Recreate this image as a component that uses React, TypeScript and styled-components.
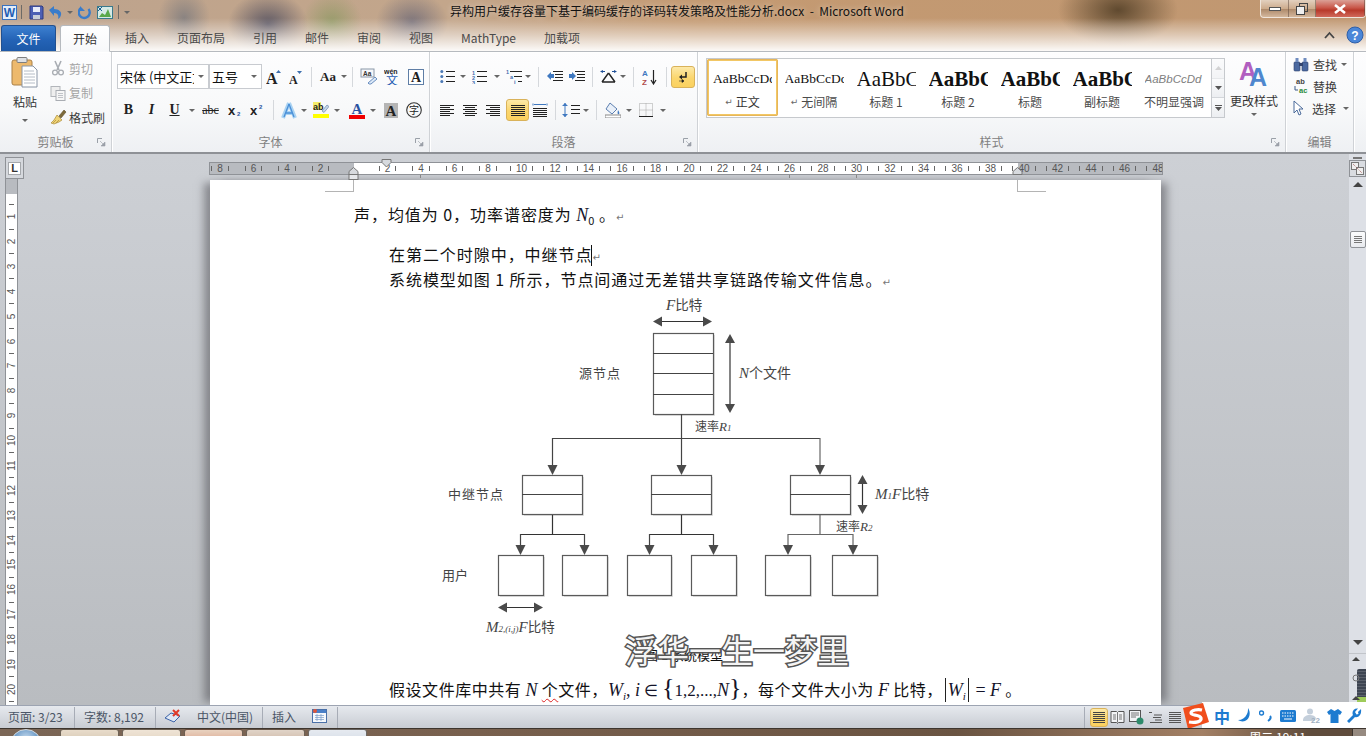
import React from 'react';
import styled, { createGlobalStyle, css } from 'styled-components';

const GlobalStyle = createGlobalStyle`
  html, body {
    margin: 0;
    padding: 0;
    overflow: hidden;
    background: #c9ccd1;
    font-family: "Noto Sans CJK SC", "Noto Sans", sans-serif;
    font-size: 12px;
  }
  * { box-sizing: border-box; }
`;

const Window = styled.div`
  width: 1366px;
  height: 736px;
  display: flex;
  flex-direction: column;
  overflow: hidden;
`;

/* ---------- title bar and tabs ---------- */
const Chrome = styled.div`
  height: 51px;
  flex: none;
  position: relative;
  z-index: 2;
  background:
    linear-gradient(to bottom, rgba(255,255,255,0) 0, rgba(255,255,255,0) 18px, rgba(255,255,255,.5) 36px, rgba(255,255,255,.95) 51px),
    radial-gradient(ellipse 26px 30px at 184px 18px, rgba(120,120,125,.75), transparent),
    radial-gradient(ellipse 40px 32px at 268px 24px, rgba(70,70,90,.8), transparent),
    radial-gradient(ellipse 30px 30px at 332px 22px, rgba(130,150,90,.65), transparent),
    radial-gradient(ellipse 36px 30px at 412px 22px, rgba(95,95,115,.7), transparent),
    radial-gradient(ellipse 60px 36px at 1118px 10px, rgba(85,65,40,.9), transparent),
    linear-gradient(90deg, #bda38d 0, #c3a68b 450px, #c49a72 700px, #c09771 1366px);
`;

const TitleRow = styled.div`
  height: 24px;
  display: flex;
  align-items: flex-start;
`;

const QuickAccess = styled.div`
  width: 145px;
  height: 22px;
  padding: 2px 0 0 2px;
  display: flex;
  align-items: center;
`;

const QatSep = styled.span<{ $l: number; $r: number }>`
  width: 1px;
  height: 14px;
  background: #6d6a66;
  margin-left: ${(p) => p.$l}px;
  margin-right: ${(p) => p.$r}px;
`;

const TitleText = styled.div`
  margin-left: 305px;
  height: 22px;
  line-height: 22px;
  font-size: 12px;
  color: #111;
  white-space: pre;
  flex: 1;
  text-shadow: 0 0 6px rgba(255,255,255,.55);
`;

const WindowButtons = styled.div`
  width: 106px;
  height: 18px;
  margin-right: 0;
  display: flex;
  border: 1px solid rgba(255,255,255,.75);
  border-top: none;
  border-radius: 0 0 4px 4px;
  overflow: hidden;
`;

const WinButton = styled.div<{ $w: number; $close?: boolean }>`
  width: ${(p) => p.$w}px;
  display: flex;
  align-items: center;
  justify-content: center;
  border-right: 1px solid rgba(90,70,60,.5);
  background: ${(p) =>
    p.$close
      ? 'linear-gradient(#dba096 0, #c9584a 45%, #b8392a 60%, #d0695a 100%)'
      : 'linear-gradient(rgba(255,255,255,.55), rgba(255,255,255,.2) 50%, rgba(120,100,90,.25) 55%, rgba(255,255,255,.3))'};
`;

const TabRow = styled.div`
  height: 27px;
  display: flex;
  align-items: flex-end;
  position: relative;
  font-size: 12px;
  color: #4a4a4a;
`;

const FileTab = styled.div`
  width: 55px;
  height: 26px;
  margin-left: 1px;
  padding-bottom: 1px;
  display: flex;
  align-items: center;
  justify-content: center;
  color: #fff;
  border-radius: 3px 3px 0 0;
  background: linear-gradient(#3d80d0, #2463b6 55%, #1d59a8);
  border: 1px solid #22508f;
  border-bottom: none;
`;

const ActiveTab = styled.div`
  width: 50px;
  height: 27px;
  margin: 0 15px 0 4px;
  padding-bottom: 1px;
  display: flex;
  align-items: center;
  justify-content: center;
  color: #333;
  background: linear-gradient(#fff, #f7f8fa);
  border: 1px solid #b6babf;
  border-bottom: 1px solid #f8f9fa;
  border-radius: 3px 3px 0 0;
  margin-bottom: -1px;
  position: relative;
`;

const TabLabel = styled.div<{ $gap?: number }>`
  height: 26px;
  line-height: 25px;
  margin-right: ${(p) => p.$gap ?? 28}px;
`;

const HelpCorner = styled.div`
  position: absolute;
  right: 2px;
  top: 2px;
  width: 40px;
  display: flex;
  align-items: center;
  justify-content: space-between;
`;

/* ---------- ribbon ---------- */
const Ribbon = styled.div`
  height: 103px;
  flex: none;
  display: flex;
  background: linear-gradient(#fdfdfe 0, #f8f9fa 55%, #eef0f3 100%);
  border-top: 1px solid #b6babf;
  border-bottom: 2px solid #8e9196;
  box-shadow: inset 0 1px 0 #fff;
`;

const Group = styled.div<{ $w: number }>`
  width: ${(p) => p.$w}px;
  flex: none;
  position: relative;
  display: flex;
  flex-direction: column;
  border-right: 1px solid #cfd2d6;
  box-shadow: 1px 0 0 #fff;
`;

const GroupBody = styled.div<{ $pl?: number; $pt?: number }>`
  flex: 1;
  min-height: 0;
  padding-left: ${(p) => p.$pl ?? 0}px;
  padding-top: ${(p) => p.$pt ?? 0}px;
`;

const GroupLabel = styled.div`
  height: 22px;
  line-height: 23px;
  text-align: center;
  color: #808080;
  font-size: 12px;
`;

const Launcher = styled.span`
  position: absolute;
  right: 5px;
  bottom: 5px;
  width: 9px;
  height: 9px;
  display: flex;
`;

const BodyRow = styled.div`
  display: flex;
  height: 100%;
`;

const PasteButton = styled.div`
  width: 50px;
  display: flex;
  flex-direction: column;
  align-items: center;
  padding-top: 5px;
  color: #333;
`;

const PasteLabel = styled.span`
  margin: 5px 0 8px;
  line-height: 18px;
`;

const SmallList = styled.div<{ $pt?: number; $h?: number }>`
  display: flex;
  flex-direction: column;
  padding-top: ${(p) => p.$pt ?? 0}px;
  > * { height: ${(p) => p.$h ?? 24.5}px; }
`;

const SmallItem = styled.div<{ $off?: boolean; $gap?: number }>`
  display: flex;
  align-items: center;
  gap: ${(p) => p.$gap ?? 3}px;
  color: ${(p) => (p.$off ? '#a5a5a5' : '#3a3a3a')};
`;

const ToolRow = styled.div<{ $mt?: number; $h?: number }>`
  display: flex;
  align-items: center;
  height: ${(p) => p.$h ?? 25}px;
  margin-top: ${(p) => p.$mt ?? 0}px;
`;

const activeLook = css`
  background: linear-gradient(#fde9a8, #fbd66e 55%, #fbd15f);
  border: 1px solid #d9b25a;
  border-radius: 3px;
`;

const Tool = styled.span<{ $w: number; $ml?: number; $on?: boolean }>`
  width: ${(p) => p.$w}px;
  height: 22px;
  margin-left: ${(p) => p.$ml ?? 0}px;
  display: flex;
  align-items: center;
  justify-content: center;
  flex: none;
  ${(p) => p.$on && activeLook}
`;

const CaretWrap = styled.span<{ $w?: number }>`
  width: ${(p) => p.$w ?? 8}px;
  display: flex;
  justify-content: center;
  flex: none;
`;

const CaretShape = styled.i`
  width: 0;
  height: 0;
  border-left: 3px solid transparent;
  border-right: 3px solid transparent;
  border-top: 3px solid #666;
`;

const Caret = ({ w }: { w?: number }) => (
  <CaretWrap $w={w}>
    <CaretShape />
  </CaretWrap>
);

const ToolSep = styled.span<{ $l: number; $r: number }>`
  width: 1px;
  height: 20px;
  flex: none;
  margin-left: ${(p) => p.$l}px;
  margin-right: ${(p) => p.$r}px;
  background: #d5d8dc;
`;

const Combo = styled.div<{ $w: number }>`
  width: ${(p) => p.$w}px;
  height: 25px;
  flex: none;
  display: flex;
  align-items: center;
  justify-content: space-between;
  padding: 0 4px 0 2px;
  background: #fff;
  border: 1px solid #c8cbd0;
  color: #111;
  font-size: 13px;
  white-space: nowrap;
  overflow: hidden;
`;

const ComboText = styled.span<{ $w: number }>`
  width: ${(p) => p.$w}px;
  overflow: hidden;
`;

const Letter = styled.span<{ $bold?: boolean; $italic?: boolean; $size?: number; $under?: boolean; $strike?: boolean }>`
  font-family: "Liberation Serif", serif;
  font-weight: ${(p) => (p.$bold ? 700 : 400)};
  font-style: ${(p) => (p.$italic ? 'italic' : 'normal')};
  font-size: ${(p) => p.$size ?? 14}px;
  color: #222;
  line-height: 1;
  text-decoration: ${(p) => (p.$under ? 'underline' : p.$strike ? 'line-through' : 'none')};
`;

const Gallery = styled.div`
  width: 506px;
  height: 60px;
  flex: none;
  display: flex;
  background: #fff;
  border: 1px solid #c6c9cd;
`;

const StyleItem = styled.div<{ $on?: boolean; $w?: number }>`
  width: ${(p) => p.$w ?? 72}px;
  flex: none;
  height: 58px;
  display: flex;
  flex-direction: column;
  align-items: center;
  color: #4b4b4b;
  font-size: 12px;
  white-space: nowrap;
  ${(p) =>
    p.$on &&
    css`
      border: 2px solid #f2c765;
      border-radius: 2px;
      outline: 1px solid #e6b65a;
      outline-offset: -1px;
      height: 57px;
      color: #333;
    `}
`;

const Preview = styled.div<{ $font?: string; $size: number; $bold?: boolean; $italic?: boolean; $color?: string; $selected?: boolean }>`
  width: 59px;
  height: ${(p) => (p.$selected ? 32 : 34)}px;
  padding-top: ${(p) => (p.$selected ? 5 : 7)}px;
  line-height: 26px;
  overflow: hidden;
  white-space: nowrap;
  font-family: ${(p) => p.$font ?? '"Liberation Serif", serif'};
  font-size: ${(p) => p.$size}px;
  font-weight: ${(p) => (p.$bold ? 700 : 400)};
  font-style: ${(p) => (p.$italic ? 'italic' : 'normal')};
  color: ${(p) => p.$color ?? '#111'};
`;

const StyleName = styled.div`
  line-height: 18px;
  display: flex;
  align-items: center;
  gap: 3px;
`;

const ReturnMark = styled.span`
  font-family: "DejaVu Sans", sans-serif;
  font-size: 9px;
  color: #666;
`;

const GalleryScroll = styled.div`
  width: 14px;
  height: 60px;
  flex: none;
  display: flex;
  flex-direction: column;
  margin-left: -1px;
  border: 1px solid #c6c9cd;
`;

const ScrollCell = styled.div<{ $dim?: boolean }>`
  flex: 1;
  display: flex;
  align-items: center;
  justify-content: center;
  background: linear-gradient(#fafbfc, #eceef1);
  border-bottom: 1px solid #d3d6da;
  opacity: ${(p) => (p.$dim ? 0.5 : 1)};
  &:last-child { border-bottom: none; }
`;

const ChangeStyle = styled.div`
  width: 54px;
  margin-left: 2px;
  display: flex;
  flex-direction: column;
  align-items: center;
  color: #333;
`;

const ChangeLabel = styled.span`
  line-height: 18px;
  margin: 4px 0 3px;
  white-space: nowrap;
`;

/* ---------- workspace ---------- */
const Workspace = styled.div`
  height: 551px;
  flex: none;
  display: flex;
  background: linear-gradient(#cdd0d5, #b9bcc0);
`;

const LeftRail = styled.div`
  width: 209px;
  flex: none;
  padding: 3px 0 0 5px;
  display: flex;
  flex-direction: column;
`;

const TabSelector = styled.div`
  width: 19px;
  height: 22px;
  flex: none;
  display: flex;
  align-items: center;
  justify-content: center;
  background: #d5d8dd;
  border: 1px solid #8f9297;
`;

const SelectorInner = styled.div`
  width: 13px;
  height: 13px;
  display: flex;
  align-items: center;
  justify-content: center;
  background: #fff;
  border: 1px solid #a5a8ac;
  color: #333;
  font: 700 11px "Liberation Sans", sans-serif;
`;

const VRuler = styled.div`
  width: 13px;
  flex: 1;
  padding-top: 19px;
  border-left: 1px solid #8f9297;
  border-right: 1px solid #8f9297;
  background: linear-gradient(#b8bbc0 0, #b8bbc0 15px, #fff 15px);
  overflow: hidden;
`;

const VCell = styled.div`
  height: 12.45px;
  display: flex;
  align-items: center;
  justify-content: center;
  color: #555;
  font: 10px "Liberation Sans", sans-serif;
`;

const VNum = styled.span`
  display: block;
  transform: rotate(-90deg);
  white-space: nowrap;
`;

const VTick = styled.i`
  width: 5px;
  height: 1px;
  background: #666;
`;

const CenterColumn = styled.div`
  width: 954px;
  flex: none;
  display: flex;
  flex-direction: column;
`;

const RulerStrip = styled.div`
  height: 26px;
  flex: none;
  padding-top: 8px;
  position: relative;
  z-index: 1;
`;

const HRuler = styled.div`
  height: 13px;
  display: flex;
  overflow: hidden;
  border: 1px solid #8f9297;
  background: linear-gradient(90deg, #b8bbc0 0, #b8bbc0 144px, #fff 144px, #fff 808px, #b8bbc0 808px);
`;

const RulerCells = styled.div`
  display: flex;
  margin-left: -6.75px;
`;

const RulerCell = styled.div`
  width: 33.5px;
  flex: none;
  display: flex;
  align-items: center;
  justify-content: center;
  gap: 5px;
  height: 11px;
  color: #555;
  font: 10px/11px "Liberation Sans", sans-serif;
`;

const HTick = styled.i`
  width: 1px;
  height: 5px;
  background: #666;
`;

const TabStops = styled.div`
  position: absolute;
  left: 145px;
  top: 21px;
  width: 664px;
  height: 3px;
  background: repeating-linear-gradient(90deg, transparent 0, transparent 33px, #888 33px, #888 33.5px);
`;

const Marker = styled.span<{ $left: number; $top: number }>`
  position: absolute;
  left: ${(p) => p.$left}px;
  top: ${(p) => p.$top}px;
  display: flex;
`;

const Page = styled.div`
  width: 951px;
  margin-left: 1px;
  flex: 1;
  min-height: 0;
  position: relative;
  background: #fff;
  padding: 22px 0 0 144px;
  color: #111;
  font-size: 16px;
  letter-spacing: 0.95px;
  box-shadow: -9px 0 8px -3px rgba(80,80,85,.55), 9px 0 8px -3px rgba(80,80,85,.55);
`;

const CropMark = styled.span<{ $right?: boolean }>`
  position: absolute;
  top: 0;
  left: ${(p) => (p.$right ? 807 : 115)}px;
  width: 29px;
  height: 12px;
  border-bottom: 1px solid #b4b4b4;
  ${(p) => (p.$right ? 'border-left' : 'border-right')}: 1px solid #b4b4b4;
`;

const DocLine = styled.div<{ $indent?: boolean; $mt?: number; $tight?: boolean }>`
  height: 24px;
  line-height: 24px;
  white-space: pre;
  padding-left: ${(p) => (p.$indent ? 35 : 0)}px;
  margin-top: ${(p) => p.$mt ?? 0}px;
  ${(p) => p.$tight && 'letter-spacing: 0.55px;'}
`;

const MathVar = styled.span<{ $size?: number }>`
  font-family: "Liberation Serif", serif;
  font-style: italic;
  font-size: ${(p) => p.$size ?? 18}px;
  letter-spacing: 0;
  color: #14142a;
`;

const MathUp = styled(MathVar)`
  font-style: normal;
`;

const Sub = styled.sub`
  font-size: 11px;
  line-height: 0;
  letter-spacing: 0;
`;

const Brace = styled.span`
  font-family: "Liberation Serif", serif;
  font-size: 26px;
  line-height: 20px;
  letter-spacing: 0;
  color: #14142a;
  font-weight: 300;
`;

const AbsBar = styled.span`
  display: inline-block;
  width: 1px;
  height: 24px;
  margin: 0 2px;
  background: #222;
  vertical-align: -6px;
`;

const TextCursor = styled.span`
  display: inline-block;
  width: 1px;
  height: 21px;
  margin-left: -1px;
  background: #111;
  vertical-align: -5px;
`;

const ParaMark = styled.span`
  font-family: "DejaVu Sans", sans-serif;
  font-size: 10px;
  color: #777;
  letter-spacing: 0;
`;

const Squiggle = styled.span`
  text-decoration: underline wavy #d22;
  text-decoration-thickness: 1px;
  text-underline-offset: 2px;
`;

const FigureWrap = styled.div`
  width: 500px;
  height: 345px;
  margin: 4px 0 0 76px;
  letter-spacing: 0;
`;

const Caption = styled.div`
  height: 24px;
  margin-top: 3px;
  margin-left: 291px;
  position: relative;
  line-height: 24px;
  font-size: 13px;
  letter-spacing: 0;
  white-space: pre;
`;

const Watermark = styled.div`
  position: absolute;
  left: -20px;
  top: -11px;
  font-size: 32px;
  line-height: 34px;
  color: #f4f4f4;
  white-space: nowrap;
  -webkit-text-stroke: 3px #555;
  paint-order: stroke fill;
`;

const RightGap = styled.div`
  flex: 1;
`;

const VScroll = styled.div`
  width: 17px;
  flex: none;
  display: flex;
  flex-direction: column;
  align-items: center;
  background: #dde0e6;
`;

const SplitHandle = styled.i`
  width: 9px;
  height: 2px;
  margin-top: 3px;
  background: #777;
  flex: none;
`;

const ViewRulerBtn = styled.div`
  width: 17px;
  height: 17px;
  margin-top: 1px;
  flex: none;
  display: flex;
  align-items: center;
  justify-content: center;
  border: 1px solid #8f9297;
  background: #d9dce1;
`;

const ScrollArrow = styled.i<{ $down?: boolean; $mt: number }>`
  width: 0;
  height: 0;
  flex: none;
  margin-top: ${(p) => p.$mt}px;
  border-left: 5px solid transparent;
  border-right: 5px solid transparent;
  ${(p) => (p.$down ? 'border-top' : 'border-bottom')}: 5px solid #444;
`;

const Thumb = styled.div`
  width: 16px;
  height: 17px;
  margin-top: 44px;
  flex: none;
  display: flex;
  flex-direction: column;
  align-items: center;
  justify-content: center;
  gap: 1px;
  background: linear-gradient(#fbfcfd, #e8eaee);
  border: 1px solid #8f9297;
  border-radius: 2px;
`;

const GripLine = styled.i`
  width: 8px;
  height: 1px;
  background: #777;
`;

const ScrollFiller = styled.div`
  flex: 1;
`;

const PageNav = styled.div`
  width: 17px;
  height: 52px;
  flex: none;
  display: flex;
  justify-content: flex-end;
  position: relative;
  border-top: 1px solid #c2c5ca;
  margin-top: 8px;
`;

const LevelMeter = styled.div`
  width: 9px;
  height: 36px;
  margin-top: 15px;
  background:
    linear-gradient(transparent 0, transparent 28px, #9ecb5a 28px),
    repeating-linear-gradient(#3e4552 0, #3e4552 2px, #5a606b 2px, #5a606b 3px);
  border-radius: 2px 0 0 0;
`;

const NavGlyph = styled.span`
  position: absolute;
  left: 3px;
  top: 2px;
`;

/* ---------- status bar ---------- */
const StatusBar = styled.div`
  height: 23px;
  flex: none;
  display: flex;
  align-items: center;
  position: relative;
  background: linear-gradient(#e6e9ee, #c8ccd3);
  border-top: 1px solid #9da4b2;
  color: #4a5566;
  font-size: 12px;
`;

const StatusCell = styled.div<{ $w: number; $pl: number }>`
  width: ${(p) => p.$w}px;
  height: 21px;
  flex: none;
  display: flex;
  align-items: center;
  gap: 16px;
  padding-left: ${(p) => p.$pl}px;
  padding-bottom: 2px;
  border-right: 1px solid #a7acb6;
  white-space: nowrap;
`;

const ViewIcons = styled.div`
  margin-left: 746px;
  height: 21px;
  padding-left: 5px;
  display: flex;
  align-items: center;
  border-left: 1px solid #a7acb6;
`;

const ViewBtn = styled.span<{ $on?: boolean }>`
  width: ${(p) => (p.$on ? 18 : 19)}px;
  height: 19px;
  display: flex;
  align-items: center;
  justify-content: center;
  ${(p) => p.$on && activeLook}
`;

const ImeBar = styled.div`
  position: absolute;
  right: 0;
  top: -4px;
  width: 184px;
  height: 27px;
  display: flex;
  align-items: center;
  background: linear-gradient(90deg, transparent 0, transparent 20px, #fff 20px);
  color: #1d7bd0;
`;

const ImeLogo = styled.span`
  width: 27px;
  height: 26px;
  flex: none;
  display: flex;
`;

const ImeItem = styled.span<{ $w: number }>`
  width: ${(p) => p.$w}px;
  flex: none;
  display: flex;
  align-items: center;
  justify-content: center;
  font-weight: 700;
  font-size: 16px;
  line-height: 1;
`;

/* ---------- task bar ---------- */
const TaskBar = styled.div`
  height: 8px;
  flex: 1;
  display: flex;
  overflow: hidden;
  position: relative;
  background: linear-gradient(90deg, #7b6656 0, #78604e 35%, #6a5442 70%, #a38065 88%, #5f4c3c 96%);
  border-top: 1px solid #3d352e;
`;

const StartOrb = styled.span`
  width: 32px;
  height: 32px;
  flex: none;
  margin: 0 18px 0 10px;
  border-radius: 50%;
  background: radial-gradient(circle at 50% 30%, #c8dcef, #4f86bb 60%);
  border: 1px solid #cfd8df;
`;

const TaskButton = styled.span<{ $tint: string }>`
  width: 59px;
  height: 24px;
  flex: none;
  margin-right: 3px;
  border-radius: 3px 3px 0 0;
  border: 1px solid rgba(60,50,40,.7);
  background: ${(p) => p.$tint};
`;

const Clock = styled.span`
  position: absolute;
  right: 60px;
  top: 0;
  color: #fff;
  font-size: 12px;
  line-height: 15px;
  white-space: nowrap;
`;

const ShowDesktop = styled.span`
  position: absolute;
  right: 0;
  top: 0;
  width: 14px;
  height: 8px;
  background: rgba(255,255,255,.35);
  border-left: 1px solid #3d352e;
`;

/* ---------- icons ---------- */
const Ico = ({ w = 16, h = 16, children }: { w?: number; h?: number; children: React.ReactNode }) => (
  <svg width={w} height={h} viewBox={`0 0 ${w} ${h}`} fill="none">
    {children}
  </svg>
);

const LineSet = ({ rows, x = 0, y = 1, gap = 2, color = '#222', w = 16, h = 15 }: { rows: number[][]; x?: number; y?: number; gap?: number; color?: string; w?: number; h?: number }) => (
  <svg width={w} height={h} viewBox={`0 0 ${w} ${h}`}>
    {rows.map(([a, b], i) => (
      <path key={i} d={`M${a + x} ${y + i * gap + 0.5}H${b + x}`} stroke={color} />
    ))}
  </svg>
);

const WordIcon = () => (
  <Ico w={15} h={15}>
    <rect x="0.5" y="0.5" width="14" height="14" fill="#e4edf9" stroke="#3b72bf" />
    <text x="7.5" y="12" textAnchor="middle" fontSize="12" fontWeight="700" fontFamily="Liberation Sans" fill="#1f5cb3">W</text>
  </Ico>
);

const SaveIcon = () => (
  <Ico w={15} h={15}>
    <path d="M1 1h12l1 1v12H1z" fill="#4d5fb4" stroke="#2f3a80" />
    <rect x="4" y="2" width="7" height="5" fill="#e8ecfa" />
    <rect x="4" y="10" width="7" height="4" fill="#c9cdd8" />
  </Ico>
);

const UndoIcon = () => (
  <Ico w={15} h={15}>
    <path d="M1 5 6 1v3c5 0 8 3 7 6-.5 2-1.500 3-3 4 1-3 0-6-4-6v3z" fill="#3a7cca" />
  </Ico>
);

const RedoIcon = () => (
  <Ico w={14} h={15}>
    <path d="M3 3a5.500 5.500 0 1 0 7.500 1" stroke="#3a7cca" strokeWidth="2.400" />
    <path d="M1 1h5v5z" fill="#3a7cca" transform="rotate(180 3.5 3.5) translate(-1 0)" />
  </Ico>
);

const MathPicIcon = () => (
  <Ico w={16} h={15}>
    <rect x="0.5" y="1.5" width="15" height="12" fill="#d6eae6" stroke="#3a7a8c" />
    <path d="M2 12l3-4 3 2 3-6 3 8z" fill="#5aa84a" />
    <path d="M1 2l4 4M1 6l4-4" stroke="#1f5f8f" />
  </Ico>
);

const PasteIcon = () => (
  <Ico w={28} h={31}>
    <rect x="1" y="3" width="20" height="25" rx="2" fill="#edb96d" stroke="#a98048" />
    <rect x="6" y="0.5" width="10" height="5" rx="1" fill="#dfe1e4" stroke="#7e7e7e" />
    <path d="M11 9h11l4 4v17H11z" fill="#fff" stroke="#8894a5" />
    <path d="M13 14h10M13 17h11M13 20h11M13 23h11M13 26h11" stroke="#b5bcc6" />
  </Ico>
);

const CutIcon = () => (
  <Ico>
    <path d="M5 1l4 9M11 1L7 10" stroke="#a9adb3" strokeWidth="1.600" />
    <circle cx="5" cy="12.500" r="2.400" stroke="#a9adb3" strokeWidth="1.300" />
    <circle cx="11" cy="12.500" r="2.400" stroke="#a9adb3" strokeWidth="1.300" />
  </Ico>
);

const CopyIcon = () => (
  <Ico>
    <rect x="1" y="1.500" width="9" height="10" fill="#eee" stroke="#b2b5ba" />
    <rect x="6" y="5.500" width="9" height="10" fill="#f6f6f6" stroke="#a9adb3" />
    <path d="M8 8.500h5M8 10.500h5M8 12.500h5" stroke="#c0c3c8" />
  </Ico>
);

const BrushIcon = () => (
  <Ico w={17} h={16}>
    <path d="M9 7l5-6 2 2-5 6z" fill="#7d6a3a" stroke="#5c4c28" strokeWidth=".6" />
    <path d="M7 6l5 5-3 2-5 2-3-1 3-3z" fill="#f0d476" stroke="#a98a3a" strokeWidth=".7" />
    <path d="M3 14l3-3M6 14l3-3" stroke="#a98a3a" strokeWidth=".7" />
  </Ico>
);

const GrowIcon = ({ up }: { up: boolean }) => (
  <Ico w={up ? 16 : 14} h={16}>
    <text x="0" y="15" fontFamily="Liberation Serif" fontWeight="700" fontSize={up ? 16 : 12} fill="#222">A</text>
    <path d={up ? 'M10 4h5l-2.500-3z' : 'M8 2h5l-2.500 3z'} fill="#3d6fae" />
  </Ico>
);

const ClearIcon = () => (
  <Ico w={18} h={17}>
    <rect x="1" y="1" width="13" height="8" fill="#f5f7fa" stroke="#8a97a8" />
    <text x="3" y="8" fontSize="6.500" fontFamily="Liberation Sans" fontWeight="700" fill="#333">Aa</text>
    <path d="M8 15l7-6 2 2-6 5H9z" fill="#dbe8f7" stroke="#6a8fc0" />
  </Ico>
);

const WenIcon = () => (
  <Ico w={17} h={17}>
    <text x="0" y="6" fontSize="7" fontWeight="700" fontFamily="Liberation Sans" fill="#222">wén</text>
    <text x="2" y="17" fontSize="12" fontFamily="Noto Sans CJK SC" fill="#1f5cb3">文</text>
  </Ico>
);

const BoxAIcon = () => (
  <Ico w={16} h={16}>
    <rect x="0.500" y="0.500" width="15" height="15" fill="#fff" stroke="#5f7ea6" />
    <text x="8" y="13" textAnchor="middle" fontSize="14" fontWeight="700" fontFamily="Liberation Serif" fill="#222">A</text>
  </Ico>
);

const GlowAIcon = () => (
  <Ico w={16} h={17}>
    <path d="M8 1L2 16M8 1l6 15M4 11h8" stroke="#a9d2f2" strokeWidth="4" />
    <path d="M8 2L3 15M8 2l5 13M5 11h6" stroke="#4a90d8" strokeWidth="1.300" />
  </Ico>
);

const MarkAIcon = () => (
  <Ico w={16} h={17}>
    <rect x="0" y="0" width="8" height="8" fill="#f6ee6a" />
    <text x="0" y="8" fontSize="9" fontFamily="Liberation Sans" fontWeight="700" fill="#222">ab</text>
    <path d="M9 9l5-6 2 1.500-5 6z" fill="#c5d6ea" stroke="#5a7aa0" strokeWidth=".6" />
    <rect x="0" y="12" width="16" height="4" fill="#ffff00" />
  </Ico>
);

const RedAIcon = () => (
  <Ico w={16} h={17}>
    <text x="8" y="12" textAnchor="middle" fontSize="15" fontWeight="700" fontFamily="Liberation Serif" fill="#2a52a0">A</text>
    <rect x="0" y="13" width="16" height="4" fill="#f00000" />
  </Ico>
);

const ShadedA = () => (
  <Ico w={14} h={15}>
    <rect width="14" height="15" fill="#b5b5b5" />
    <text x="7" y="13" textAnchor="middle" fontSize="15" fontWeight="700" fontFamily="Liberation Serif" fill="#222">A</text>
  </Ico>
);

const CircledZi = () => (
  <Ico w={16} h={16}>
    <circle cx="8" cy="8" r="7.300" stroke="#333" strokeWidth="1.100" />
    <text x="8" y="12" textAnchor="middle" fontSize="10" fontFamily="Noto Sans CJK SC" fill="#222">字</text>
  </Ico>
);

const Subscript = ({ up }: { up: boolean }) => (
  <Ico w={14} h={14}>
    <text x="0" y="12" fontSize="13" fontWeight="700" fontFamily="Liberation Sans" fill="#222">x</text>
    <text x="9" y={up ? 6 : 13} fontSize="6" fontFamily="Liberation Sans" fontWeight="700" fill="#2a52a0">2</text>
  </Ico>
);

const BulletIcon = () => (
  <Ico w={15} h={13}>
    {[1.5, 6.5, 11.5].map((y) => (
      <circle key={y} cx="1.800" cy={y} r="1.500" fill="#4a78b5" />
    ))}
    <path d="M6 1.500h9M6 6.500h9M6 11.500h9" stroke="#222" />
  </Ico>
);

const NumberIcon = () => (
  <Ico w={15} h={14}>
    {['1', '2', '3'].map((t, i) => (
      <text key={t} x="0" y={4.5 + i * 5} fontSize="5.500" fontWeight="700" fontFamily="Liberation Sans" fill="#3f6db0">{t}</text>
    ))}
    <path d="M5 1.500h10M5 6.500h10M5 11.500h10" stroke="#222" />
  </Ico>
);

const MultiIcon = () => (
  <Ico w={16} h={16}>
    <text x="0" y="5" fontSize="5.500" fontWeight="700" fontFamily="Liberation Sans" fill="#3f6db0">1</text>
    <text x="4" y="10" fontSize="5.500" fontWeight="700" fontFamily="Liberation Sans" fill="#3f6db0">a</text>
    <text x="8" y="15" fontSize="5.500" fontWeight="700" fontFamily="Liberation Sans" fill="#3f6db0">i</text>
    <path d="M4 2.500h12M8 7.500h8M12 12.500h4" stroke="#222" />
  </Ico>
);

const IndentIcon = ({ more }: { more: boolean }) => (
  <Ico w={16} h={13}>
    <path d="M6 1.500h10M8 4.500h8M8 7.500h8M6 10.500h10" stroke="#222" />
    <path d={more ? 'M0 4h3V2l4 4-4 4V8H0z' : 'M7 4H4V2L0 6l4 4V8h3z'} fill="#3f78c0" />
  </Ico>
);

const AsianIcon = () => (
  <Ico w={17} h={13}>
    <path d="M8.500 3L2 12M8.500 3L15 12M2 12h13" stroke="#222" strokeWidth="1.400" />
    <path d="M0 1.500L3 0v3zM17 1.500L14 0v3z" fill="#1f4f96" />
    <path d="M3 1.500h2M12 1.500h2" stroke="#1f4f96" />
  </Ico>
);

const SortIcon = () => (
  <Ico w={16} h={16}>
    <text x="0" y="7" fontSize="8" fontWeight="700" fontFamily="Liberation Sans" fill="#3f78c0">A</text>
    <text x="0" y="15.500" fontSize="8" fontWeight="700" fontFamily="Liberation Sans" fill="#b04a4a">Z</text>
    <path d="M11.500 1v13M9 11l2.500 4 2.500-4" stroke="#222" strokeWidth="1.200" />
  </Ico>
);

const MarkIcon = () => (
  <Ico w={12} h={12}>
    <path d="M9 1v5H3" stroke="#222" strokeWidth="1.500" />
    <path d="M5 3.500L2 6l3 2.500z" fill="#222" />
    <path d="M2 10h5M5 8.500l2 1.500-2 1.500z" fill="#222" stroke="#222" strokeWidth=".6" />
  </Ico>
);

const LeftAlign = [[0, 14], [0, 10], [0, 14], [0, 10], [0, 14], [0, 10]];
const CenterAlign = [[0, 14], [2, 12], [0, 14], [2, 12], [0, 14], [2, 12]];
const RightAlign = [[0, 14], [4, 14], [0, 14], [4, 14], [0, 14], [4, 14]];
const FullAlign = [[0, 14], [0, 14], [0, 14], [0, 14], [0, 14], [0, 14]];

const SpreadIcon = () => (
  <Ico w={16} h={16}>
    <path d="M1 1.500v2M15 1.500v2" stroke="#3f78c0" />
    <path d="M2 2.500h12" stroke="#3f78c0" />
    <path d="M1 6.500h14M1 8.500h14M1 10.500h14M1 12.500h14M1 14.500h14" stroke="#222" />
  </Ico>
);

const SpacingIcon = () => (
  <Ico w={18} h={16}>
    <path d="M3 1v14" stroke="#3f78c0" />
    <path d="M0 4l3-3 3 3zM0 12l3 3 3-3z" fill="#3f78c0" />
    <path d="M9 3.500h9M9 7.500h9M9 11.500h9" stroke="#222" />
  </Ico>
);

const ShadeIcon = () => (
  <Ico w={16} h={16}>
    <path d="M5 1l7 6-5 5-6-5z" fill="#e9f0f9" stroke="#5c7fb0" />
    <path d="M13 8c1 2 2 3 1 4s-2 0-1-4z" fill="#3f78c0" />
    <rect x="0" y="13" width="16" height="3" fill="#fff" stroke="#8a8a8a" />
  </Ico>
);

const BorderIcon = () => (
  <Ico w={14} h={14}>
    <path d="M.5.500h13v13H.5zM7 .5v13M.5 7h13" stroke="#a5a5a5" strokeDasharray="1 1" />
    <path d="M0 13.500h14" stroke="#222" />
  </Ico>
);

const TinyUp = ({ color = '#555' }: { color?: string }) => (
  <Ico w={7} h={4}>
    <path d="M0 4h7L3.500 0z" fill={color} />
  </Ico>
);

const TinyDown = ({ bar }: { bar?: boolean }) => (
  <Ico w={7} h={bar ? 6 : 4}>
    {bar && <path d="M0 .5h7" stroke="#555" />}
    <path d={bar ? 'M0 2h7L3.500 6z' : 'M0 0h7L3.500 4z'} fill="#555" />
  </Ico>
);

const StyleAIcon = () => (
  <Ico w={30} h={30}>
    <text x="0" y="22" fontSize="25" fontWeight="700" fontFamily="Liberation Sans" fill="#b15fc0">A</text>
    <text x="10" y="28" fontSize="25" fontWeight="700" fontFamily="Liberation Sans" fill="#4e87ce">A</text>
  </Ico>
);

const FindIcon = () => (
  <Ico w={16} h={15}>
    <rect x="1" y="5" width="6" height="9" rx="1" fill="#4b69a0" stroke="#2b3f6b" strokeWidth=".6" />
    <rect x="9" y="5" width="6" height="9" rx="1" fill="#4b69a0" stroke="#2b3f6b" strokeWidth=".6" />
    <rect x="2.500" y="1" width="3" height="4" fill="#6f8cc0" />
    <rect x="10.500" y="1" width="3" height="4" fill="#6f8cc0" />
    <rect x="6" y="6" width="4" height="3" fill="#33456f" />
  </Ico>
);

const ReplaceIcon = () => (
  <Ico w={16} h={16}>
    <text x="3" y="6" fontSize="7.500" fontWeight="700" fontFamily="Liberation Sans" fill="#444">ab</text>
    <text x="6" y="15" fontSize="7.500" fontWeight="700" fontFamily="Liberation Sans" fill="#2a8a3a">ac</text>
    <path d="M2 8v4h3" stroke="#3a5a8a" />
  </Ico>
);

const SelectIcon = () => (
  <Ico w={12} h={16}>
    <path d="M1 1v12l3-3 2 5 2-1-2-5h4z" fill="#fff" stroke="#4a6a9a" />
  </Ico>
);

const LauncherIcon = () => (
  <Ico w={9} h={9}>
    <path d="M.5 5V.5H5" stroke="#9aa0a8" />
    <path d="M3 3l4 4M8 4v4H4z" stroke="#9aa0a8" fill="#9aa0a8" strokeWidth=".6" />
  </Ico>
);

const ProofIcon = () => (
  <Ico w={17} h={15}>
    <path d="M1 9l6-5 9 3-6 6z" fill="#dfe8f5" stroke="#3a62a8" />
    <path d="M9 1l6 6M15 1L9 7" stroke="#e03a2a" strokeWidth="2" />
  </Ico>
);

const MacroIcon = () => (
  <Ico w={15} h={14}>
    <rect x="0.500" y="0.500" width="14" height="13" fill="#f5f8fc" stroke="#4a70a8" />
    <rect x="1" y="1" width="13" height="3" fill="#4a80c8" />
    <path d="M3 6.500h9M3 8.500h9M3 10.500h9M5 5v7M9 5v7" stroke="#7a9cc8" strokeWidth=".7" />
    <circle cx="3" cy="2" r="2" fill="#e0553a" />
  </Ico>
);

const ViewPrint = () => (
  <LineSet w={14} h={13} y={1} gap={2} color="#444" rows={[[1, 13], [1, 13], [1, 13], [1, 13], [1, 13], [1, 13]]} />
);

const ViewRead = () => (
  <Ico w={15} h={14}>
    <path d="M1 1.500h5.500l1 1 1-1H14v11H8.500l-1 1-1-1H1z" fill="#f2f3f5" stroke="#555" />
    <path d="M7.500 2.500v10M3 5h3M3 7h3M3 9h3M9 5h3M9 7h3M9 9h3" stroke="#777" />
  </Ico>
);

const ViewWeb = () => (
  <Ico w={15} h={15}>
    <rect x="0.500" y="0.500" width="11" height="11" fill="#f2f3f5" stroke="#555" />
    <path d="M2 3h8M2 5h8M2 7h5" stroke="#777" />
    <circle cx="11" cy="11" r="3.500" fill="#2d8a6a" />
  </Ico>
);

const ViewOutline = () => (
  <LineSet w={14} h={13} y={1} gap={2.5} color="#555" rows={[[0, 3], [5, 13], [4, 12], [6, 13], [1, 13]]} />
);

const ViewDraft = () => (
  <LineSet w={14} h={13} y={1} gap={2} color="#555" rows={[[1, 13], [1, 13], [1, 13], [1, 13], [1, 13], [1, 13]]} />
);

const SogouLogo = () => (
  <Ico w={27} h={26}>
    <path d="M1 5l20-5 6 19-21 7z" fill="#f04e1c" />
    <path d="M20 7c-4-1-11 0-11 3s9 1 10 5-6 5-12 4" stroke="#fff" strokeWidth="3.200" />
  </Ico>
);

const MoonIcon = () => (
  <Ico w={15} h={15}>
    <path d="M10 0c3 4 2 11-3 13-3 1-5 0-7-1 4 0 7-2 9-6 1-2 1-4 1-6z" fill="#1d7bd0" />
  </Ico>
);

const PunctIcon = () => (
  <Ico w={14} h={14}>
    <circle cx="2.500" cy="4" r="2" stroke="#1d7bd0" strokeWidth="1.400" />
    <path d="M11 7c1 1 1 3-2 5" stroke="#1d7bd0" strokeWidth="2" />
  </Ico>
);

const KeyIcon = () => (
  <Ico w={16} h={12}>
    <rect width="16" height="12" rx="1.500" fill="#1d7bd0" />
    <path d="M2 3h12M2 6h12" stroke="#fff" strokeDasharray="1.500 1" />
    <path d="M4 9h8" stroke="#fff" />
  </Ico>
);

const UserIcon = () => (
  <Ico w={18} h={15}>
    <circle cx="7" cy="3.500" r="3" fill="#c4cfdb" />
    <path d="M0 12c0-3 3-5 7-5 3 0 5 1 6 3l-2 3H0z" fill="#c4cfdb" />
    <text x="8" y="15" fontSize="8" fontWeight="700" fontFamily="Liberation Sans" fill="#9fb0c2">22</text>
  </Ico>
);

const ShirtIcon = () => (
  <Ico w={15} h={15}>
    <path d="M4 1l3.500 2L11 1l4 3-2 3-1.500-1v9h-8V6L2 7 0 4z" fill="#1d7bd0" />
  </Ico>
);

const WrenchIcon = () => (
  <Ico w={15} h={15}>
    <path d="M14 1l-3 3 .5 2-2 .5L8 4l3-3.500C8 0 5.500 2 5.500 5c0 1 .2 1.500.5 2L0 13l2 2 6-6c3 1 7-2 6-8z" fill="#1d7bd0" />
  </Ico>
);

/* ---------- figure ---------- */
const boxStroke = '#5a5a5a';

const FigBox = ({ x, y, w, h, rows = [] }: { x: number; y: number; w: number; h: number; rows?: number[] }) => (
  <g>
    <rect x={x + 2} y={y + 2} width={w} height={h} fill="#e2e2e2" />
    <rect x={x + 0.5} y={y + 0.5} width={w} height={h} fill="#fff" stroke={boxStroke} strokeWidth="1.200" />
    {rows.map((r) => (
      <path key={r} d={`M${x} ${r + 0.5}H${x + w}`} stroke="#444" strokeWidth="1.200" />
    ))}
  </g>
);

const DownArrow = ({ x, y1, y2, color = '#444' }: { x: number; y1: number; y2: number; color?: string }) => (
  <g>
    <path d={`M${x} ${y1}V${y2 - 8}`} stroke={color} strokeWidth="1.200" />
    <path d={`M${x - 5} ${y2 - 10}h10l-5 10z`} fill="#4a4a4a" />
  </g>
);

const HArrow = ({ x1, x2, y }: { x1: number; x2: number; y: number }) => (
  <g>
    <path d={`M${x1 + 6} ${y}H${x2 - 6}`} stroke="#333" strokeWidth="1.200" />
    <path d={`M${x1} ${y}l9-5v10zM${x2} ${y}l-9-5v10z`} fill="#4a4a4a" />
  </g>
);

const VArrow = ({ x, y1, y2 }: { x: number; y1: number; y2: number }) => (
  <g>
    <path d={`M${x} ${y1 + 6}V${y2 - 6}`} stroke="#333" strokeWidth="1.200" />
    <path d={`M${x} ${y1}l-5 9h10zM${x} ${y2}l-5-9h10z`} fill="#4a4a4a" />
  </g>
);

const FigLabel = ({ x, y, size = 13, spacing = 0, children }: { x: number; y: number; size?: number; spacing?: number; children: React.ReactNode }) => (
  <text x={x} y={y} fontSize={size} letterSpacing={spacing} fontFamily="Noto Sans CJK SC" fill="#444">
    {children}
  </text>
);

const It = ({ children, size }: { children: React.ReactNode; size?: number }) => (
  <tspan fontFamily="Liberation Serif" fontStyle="italic" fontSize={size}>
    {children}
  </tspan>
);

const UserFork = ({ x1, x2, from, color }: { x1: number; x2: number; from: number; color?: string }) => (
  <g>
    <path d={`M${from} 515V535M${x1} 534.500H${x2}`} stroke={color ?? '#333'} strokeWidth="1.200" />
    <DownArrow x={x1} y1={534} y2={555} color={color} />
    <DownArrow x={x2} y1={534} y2={555} color={color} />
  </g>
);

const SystemFigure = () => (
  <svg width="500" height="345" viewBox="430 295 500 345">
    <FigLabel x={666} y={310} size={13.5}><It size={15}>F</It>比特</FigLabel>
    <HArrow x1={653} x2={712} y={321.5} />
    <FigBox x={653} y={333} w={60} h={81} rows={[353, 373, 394]} />
    <VArrow x={730} y1={334} y2={413} />
    <FigLabel x={739} y={378} size={14}><It size={15}>N</It>个文件</FigLabel>
    <FigLabel x={579} y={378} spacing={1}>源节点</FigLabel>
    <path d="M681.500 414V438M552.500 438.500H820" stroke="#444" strokeWidth="1.200" />
    <FigLabel x={695} y={431} size={12}>速率<It size={13}>R</It><It size={9}>1</It></FigLabel>
    <DownArrow x={552.5} y1={438} y2={475} />
    <DownArrow x={681.5} y1={438} y2={475} />
    <DownArrow x={820} y1={438} y2={475} color="#666" />
    <FigBox x={522} y={475} w={60} h={39} rows={[494]} />
    <FigBox x={651} y={475} w={60} h={39} rows={[494]} />
    <FigBox x={790} y={475} w={60} h={39} rows={[494]} />
    <FigLabel x={448} y={499} spacing={1}>中继节点</FigLabel>
    <VArrow x={862.5} y1={475} y2={514} />
    <FigLabel x={875} y={499} size={14}><It size={15}>M</It><It size={9}>1</It><It size={15}>F</It>比特</FigLabel>
    <FigLabel x={836} y={531} size={12}>速率<It size={13}>R</It><It size={9}>2</It></FigLabel>
    <UserFork x1={520.5} x2={584.5} from={552.5} />
    <UserFork x1={649.5} x2={713.5} from={681.5} />
    <UserFork x1={788} x2={853} from={820} color="#666" />
    <FigBox x={498} y={555} w={45} h={40} />
    <FigBox x={562} y={555} w={45} h={40} />
    <FigBox x={627} y={555} w={44} h={40} />
    <FigBox x={691} y={555} w={45} h={40} />
    <FigBox x={765} y={555} w={45} h={40} />
    <FigBox x={832} y={555} w={45} h={40} />
    <FigLabel x={442} y={580}>用户</FigLabel>
    <HArrow x1={498} x2={543} y={607.5} />
    <FigLabel x={486} y={632} size={13.5}><It size={15}>M</It><It size={9}>2,(i,j)</It><It size={15}>F</It>比特</FigLabel>
    <text x={947} y={640} fontSize="10" fontFamily="DejaVu Sans" fill="#777">↵</text>
  </svg>
);

/* ---------- data ---------- */
const rulerLabels = ['8', '6', '4', '2', '', '2', '4', '6', '8', '10', '12', '14', '16', '18', '20', '22', '24', '26', '28', '30', '32', '34', '36', '38', '40', '42', '44', '46', '48'];
const tabNames = ['插入', '页面布局', '引用', '邮件', '审阅', '视图', 'MathType', '加载项'];
const taskTints = [
  'linear-gradient(#e8dccb, #c9b79f)',
  'linear-gradient(#efe4d6, #d8c7b0)',
  'linear-gradient(#e8d2c0, #d4866a)',
  'linear-gradient(#e0d4c8, #c2a08a)',
  'linear-gradient(#e6eaf0, #c8d2e0)',
];
const galleryItems = [
  { text: 'AaBbCcDd', size: 13.5, name: '无间隔', mark: true },
  { text: 'AaBbC', size: 21, name: '标题 1' },
  { text: 'AaBbC', size: 21, bold: true, name: '标题 2' },
  { text: 'AaBbC', size: 21, bold: true, name: '标题' },
  { text: 'AaBbC', size: 21, bold: true, name: '副标题' },
];

const vCells: string[] = [];
for (let n = 1; n <= 20; n++) {
  vCells.push('', String(n));
}
vCells.push('');

const App: React.FC = () => (
  <Window>
    <GlobalStyle />
    <Chrome>
      <TitleRow>
        <QuickAccess>
          <WordIcon />
          <QatSep $l={4} $r={7} />
          <SaveIcon />
          <Tool $w={23}><UndoIcon /></Tool>
          <Caret w={6} />
          <Tool $w={24}><RedoIcon /></Tool>
          <MathPicIcon />
          <QatSep $l={5} $r={4} />
          <Caret w={8} />
        </QuickAccess>
        <TitleText>异构用户缓存容量下基于编码缓存的译码转发策略及性能分析.docx  -  Microsoft Word</TitleText>
        <WindowButtons>
          <WinButton $w={28}>
            <Ico w={12} h={6}><rect x="0.5" y="1.5" width="11" height="3" fill="#fff" stroke="#555" /></Ico>
          </WinButton>
          <WinButton $w={27}>
            <Ico w={12} h={12}>
              <rect x="3.5" y="0.5" width="8" height="8" fill="none" stroke="#444" />
              <rect x="0.5" y="3.5" width="8" height="8" fill="#eee" stroke="#444" />
            </Ico>
          </WinButton>
          <WinButton $w={49} $close>
            <Ico w={12} h={10}><path d="M1 1l10 8M11 1L1 9" stroke="#fff" strokeWidth="2.600" /></Ico>
          </WinButton>
        </WindowButtons>
      </TitleRow>
      <TabRow>
        <FileTab>文件</FileTab>
        <ActiveTab>开始</ActiveTab>
        {tabNames.map((name) => (
          <TabLabel key={name}>{name}</TabLabel>
        ))}
        <HelpCorner>
          <Ico w={11} h={8}><path d="M1 7l4.500-5L10 7" stroke="#444" strokeWidth="1.800" /></Ico>
          <Ico w={18} h={18}>
            <circle cx="9" cy="9" r="8" fill="#4a86d8" stroke="#2f5fa8" />
            <text x="9" y="13.500" textAnchor="middle" fontSize="12" fontWeight="700" fontFamily="Liberation Sans" fill="#fff">?</text>
          </Ico>
        </HelpCorner>
      </TabRow>
    </Chrome>

    <Ribbon>
      <Group $w={112}>
        <GroupBody>
          <BodyRow>
            <PasteButton>
              <PasteIcon />
              <PasteLabel>粘贴</PasteLabel>
              <Caret />
            </PasteButton>
            <SmallList $pt={4}>
              <SmallItem $off><CutIcon />剪切</SmallItem>
              <SmallItem $off><CopyIcon />复制</SmallItem>
              <SmallItem $gap={2}><BrushIcon />格式刷</SmallItem>
            </SmallList>
          </BodyRow>
        </GroupBody>
        <GroupLabel>剪贴板</GroupLabel>
        <Launcher><LauncherIcon /></Launcher>
      </Group>

      <Group $w={318}>
        <GroupBody $pl={5} $pt={12}>
          <ToolRow>
            <Combo $w={92}><ComboText $w={74}>宋体 (中文正文)</ComboText><CaretShape /></Combo>
            <Combo $w={53}>五号<CaretShape /></Combo>
            <Tool $w={23}><GrowIcon up /></Tool>
            <Tool $w={22}><GrowIcon up={false} /></Tool>
            <ToolSep $l={4} $r={4} />
            <Tool $w={24}><Letter $bold $size={13}>Aa</Letter></Tool>
            <Caret />
            <ToolSep $l={4} $r={4} />
            <Tool $w={24}><ClearIcon /></Tool>
            <Tool $w={23}><WenIcon /></Tool>
            <Tool $w={23}><BoxAIcon /></Tool>
          </ToolRow>
          <ToolRow $mt={10} $h={22}>
            <Tool $w={23}><Letter $bold>B</Letter></Tool>
            <Tool $w={23}><Letter $italic $bold>I</Letter></Tool>
            <Tool $w={23}><Letter $bold $under>U</Letter></Tool>
            <Caret w={12} />
            <Tool $w={25}><Letter $size={12} $strike>abc</Letter></Tool>
            <Tool $w={23}><Subscript up={false} /></Tool>
            <Tool $w={22}><Subscript up /></Tool>
            <ToolSep $l={5} $r={4} />
            <Tool $w={22}><GlowAIcon /></Tool>
            <Caret />
            <Tool $w={25}><MarkAIcon /></Tool>
            <Caret />
            <Tool $w={24} $ml={4}><RedAIcon /></Tool>
            <Caret w={7} />
            <Tool $w={30}><ShadedA /></Tool>
            <Tool $w={16}><CircledZi /></Tool>
          </ToolRow>
        </GroupBody>
        <GroupLabel>字体</GroupLabel>
        <Launcher><LauncherIcon /></Launcher>
      </Group>

      <Group $w={268}>
        <GroupBody $pl={5} $pt={12}>
          <ToolRow>
            <Tool $w={24}><BulletIcon /></Tool>
            <Caret />
            <Tool $w={24}><NumberIcon /></Tool>
            <Caret w={12} />
            <Tool $w={22}><MultiIcon /></Tool>
            <Caret w={6} />
            <ToolSep $l={7} $r={5} />
            <Tool $w={22}><IndentIcon more={false} /></Tool>
            <Tool $w={22}><IndentIcon more /></Tool>
            <ToolSep $l={4} $r={4} />
            <Tool $w={22}><AsianIcon /></Tool>
            <Caret />
            <ToolSep $l={6} $r={5} />
            <Tool $w={22}><SortIcon /></Tool>
            <ToolSep $l={5} $r={4} />
            <Tool $w={24} $on><MarkIcon /></Tool>
          </ToolRow>
          <ToolRow $mt={10} $h={22}>
            <Tool $w={24}><LineSet w={14} h={13} rows={LeftAlign} /></Tool>
            <Tool $w={22}><LineSet w={14} h={13} rows={CenterAlign} /></Tool>
            <Tool $w={24}><LineSet w={14} h={13} rows={RightAlign} /></Tool>
            <Tool $w={23} $ml={1} $on><LineSet w={14} h={13} rows={FullAlign} /></Tool>
            <Tool $w={22}><SpreadIcon /></Tool>
            <ToolSep $l={4} $r={4} />
            <Tool $w={22}><SpacingIcon /></Tool>
            <Caret />
            <ToolSep $l={6} $r={4} />
            <Tool $w={24}><ShadeIcon /></Tool>
            <Caret />
            <Tool $w={26}><BorderIcon /></Tool>
            <Caret />
          </ToolRow>
        </GroupBody>
        <GroupLabel>段落</GroupLabel>
        <Launcher><LauncherIcon /></Launcher>
      </Group>

      <Group $w={588}>
        <GroupBody $pl={8} $pt={6}>
          <BodyRow>
            <Gallery>
              <StyleItem $on $w={71}>
                <Preview $size={13.5} $selected>AaBbCcDd</Preview>
                <StyleName><ReturnMark>↵</ReturnMark>正文</StyleName>
              </StyleItem>
              {galleryItems.map((item) => (
                <StyleItem key={item.name} $w={72}>
                  <Preview $size={item.size} $bold={item.bold}>{item.text}</Preview>
                  <StyleName>{item.mark && <ReturnMark>↵</ReturnMark>}{item.name}</StyleName>
                </StyleItem>
              ))}
              <StyleItem $w={72}>
                <Preview $font='"Liberation Sans", sans-serif' $size={11.5} $italic $color="#808080">AaBbCcDd</Preview>
                <StyleName>不明显强调</StyleName>
              </StyleItem>
            </Gallery>
            <GalleryScroll>
              <ScrollCell $dim><TinyUp color="#aaa" /></ScrollCell>
              <ScrollCell><TinyDown /></ScrollCell>
              <ScrollCell><TinyDown bar /></ScrollCell>
            </GalleryScroll>
            <ChangeStyle>
              <StyleAIcon />
              <ChangeLabel>更改样式</ChangeLabel>
              <Caret />
            </ChangeStyle>
          </BodyRow>
        </GroupBody>
        <GroupLabel>样式</GroupLabel>
        <Launcher><LauncherIcon /></Launcher>
      </Group>

      <Group $w={68}>
        <GroupBody $pl={7} $pt={1}>
          <SmallList $h={22}>
            <SmallItem $gap={4}><FindIcon />查找<CaretShape /></SmallItem>
            <SmallItem $gap={4}><ReplaceIcon />替换</SmallItem>
            <SmallItem $gap={7}><SelectIcon />选择<CaretShape /></SmallItem>
          </SmallList>
        </GroupBody>
        <GroupLabel>编辑</GroupLabel>
      </Group>
    </Ribbon>

    <Workspace>
      <LeftRail>
        <TabSelector><SelectorInner>L</SelectorInner></TabSelector>
        <VRuler>
          {vCells.map((label, i) => (
            <VCell key={i}>{label ? <VNum>{label}</VNum> : <VTick />}</VCell>
          ))}
        </VRuler>
      </LeftRail>

      <CenterColumn>
        <RulerStrip>
          <HRuler>
            <RulerCells>
              {rulerLabels.map((label, i) => (
                <RulerCell key={i}>
                  {label && <HTick />}
                  {label}
                  {label && <HTick />}
                </RulerCell>
              ))}
            </RulerCells>
          </HRuler>
          <TabStops />
          <Marker $left={172} $top={5}>
            <Ico w={11} h={9}><path d="M1 .5h9v3L5.500 8 1 3.500z" fill="#d7dade" stroke="#777" /></Ico>
          </Marker>
          <Marker $left={139} $top={13}>
            <Ico w={11} h={13}>
              <path d="M5.500.5l4.500 4v3H1v-3z" fill="#d7dade" stroke="#777" />
              <rect x="1" y="7.500" width="9" height="5" fill="#e6e8eb" stroke="#777" />
            </Ico>
          </Marker>
          <Marker $left={803} $top={13}>
            <Ico w={11} h={9}><path d="M5.500.5l4.500 4v3H1v-3z" fill="#d7dade" stroke="#777" /></Ico>
          </Marker>
        </RulerStrip>
        <Page>
          <CropMark />
          <CropMark $right />
          <DocLine>声，均值为 0，功率谱密度为 <MathVar>N</MathVar><Sub>0</Sub> 。<ParaMark>↵</ParaMark></DocLine>
          <DocLine $indent $mt={16}>在第二个时隙中，中继节点<TextCursor /><ParaMark>↵</ParaMark></DocLine>
          <DocLine $indent $mt={1}>系统模型如图 1 所示，节点间通过无差错共享链路传输文件信息。<ParaMark>↵</ParaMark></DocLine>
          <FigureWrap><SystemFigure /></FigureWrap>
          <Caption>
            图 1 系统模型
            <Watermark>浮华一生一梦里</Watermark>
          </Caption>
          <DocLine $indent $tight $mt={10}>
            假设文件库中共有 <MathVar>N</MathVar> <Squiggle>个</Squiggle>文件，<MathVar>W</MathVar><Sub><MathVar $size={11}>i</MathVar></Sub><MathUp>, </MathUp><MathVar>i</MathVar><MathUp $size={16}> ∈ </MathUp><Brace>{'{'}</Brace><MathUp $size={17}>1,2,...,</MathUp><MathVar>N</MathVar><Brace>{'}'}</Brace>，每个文件大小为 <MathVar>F</MathVar> 比特，<AbsBar /><MathVar>W</MathVar><Sub><MathVar $size={11}>i</MathVar></Sub><AbsBar /><MathUp> = </MathUp><MathVar>F</MathVar> 。
          </DocLine>
        </Page>
      </CenterColumn>

      <RightGap />

      <VScroll>
        <SplitHandle />
        <ViewRulerBtn>
          <Ico w={13} h={13}>
            <rect x="0.5" y="0.5" width="7" height="7" fill="#eee" stroke="#777" />
            <rect x="5.5" y="5.5" width="7" height="7" fill="#eee" stroke="#777" />
            <path d="M2 2l9 9" stroke="#a66" strokeDasharray="1 1" />
          </Ico>
        </ViewRulerBtn>
        <ScrollArrow $mt={5} />
        <Thumb><GripLine /><GripLine /><GripLine /><GripLine /></Thumb>
        <ScrollFiller />
        <ScrollArrow $down $mt={0} />
        <PageNav>
          <NavGlyph>
            <Ico w={8} h={46}>
              <path d="M0 5l4-4 4 4zM0 44h8l-4-4z" fill="#444" />
              <circle cx="4" cy="22" r="3" stroke="#777" fill="none" />
            </Ico>
          </NavGlyph>
          <LevelMeter />
        </PageNav>
      </VScroll>
    </Workspace>

    <StatusBar>
      <StatusCell $w={75} $pl={8}>页面: 3/23</StatusCell>
      <StatusCell $w={81} $pl={9}>字数: 8,192</StatusCell>
      <StatusCell $w={107} $pl={8}><ProofIcon />中文(中国)</StatusCell>
      <StatusCell $w={75} $pl={9}>插入<MacroIcon /></StatusCell>
      <ViewIcons>
        <ViewBtn $on><ViewPrint /></ViewBtn>
        <ViewBtn><ViewRead /></ViewBtn>
        <ViewBtn><ViewWeb /></ViewBtn>
        <ViewBtn><ViewOutline /></ViewBtn>
        <ViewBtn><ViewDraft /></ViewBtn>
      </ViewIcons>
      <ImeBar>
        <ImeLogo><SogouLogo /></ImeLogo>
        <ImeItem $w={26}>中</ImeItem>
        <ImeItem $w={20}><MoonIcon /></ImeItem>
        <ImeItem $w={21}><PunctIcon /></ImeItem>
        <ImeItem $w={24}><KeyIcon /></ImeItem>
        <ImeItem $w={24}><UserIcon /></ImeItem>
        <ImeItem $w={20}><ShirtIcon /></ImeItem>
        <ImeItem $w={21}><WrenchIcon /></ImeItem>
      </ImeBar>
    </StatusBar>

    <TaskBar>
      <StartOrb />
      {taskTints.map((tint) => (
        <TaskButton key={tint} $tint={tint} />
      ))}
      <Clock>周二 19:11</Clock>
      <ShowDesktop />
    </TaskBar>
  </Window>
);

export default App;
